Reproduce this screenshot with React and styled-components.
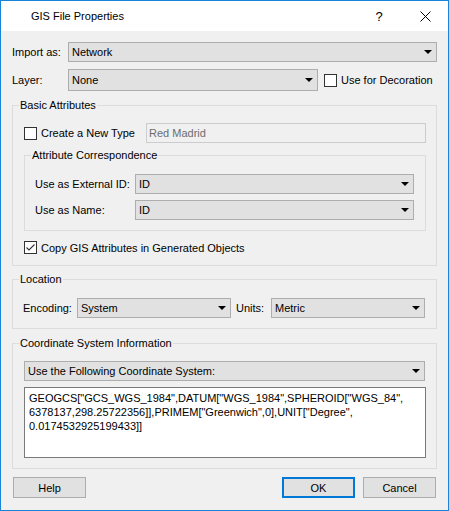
import React from 'react';
import styled, { createGlobalStyle } from 'styled-components';

const GlobalStyle = createGlobalStyle`
  html, body {
    margin: 0;
    padding: 0;
    background: #ffffff;
  }
  body {
    font-family: "Liberation Sans", Arial, sans-serif;
    font-size: 11px;
    color: #000000;
  }
  * {
    box-sizing: border-box;
  }
`;

const Window = styled.div`
  width: 449px;
  height: 511px;
  border: 1px solid #1883d7;
  display: flex;
  flex-direction: column;
  background: #f0f0f0;
`;

const TitleBar = styled.div`
  height: 30px;
  background: #ffffff;
  display: flex;
  align-items: center;
  padding-left: 30px;
`;

const Title = styled.div`
  flex: 1;
  font-size: 11px;
`;

const CaptionButton = styled.div`
  width: 46px;
  height: 30px;
  display: flex;
  align-items: center;
  justify-content: center;
  font-size: 13px;
`;

const Body = styled.div`
  flex: 1;
  display: flex;
  flex-direction: column;
  padding: 11px 11px 0 11px;
`;

const Row = styled.div`
  display: flex;
  align-items: center;
  height: ${p => p.$h || 20}px;
  margin-top: ${p => p.$mt || 0}px;
`;

const Label = styled.span`
  width: ${p => (p.$w ? `${p.$w}px` : 'auto')};
  margin-left: ${p => p.$ml || 0}px;
  flex-shrink: 0;
  white-space: nowrap;
`;

const ComboBox = styled.div`
  height: 100%;
  width: ${p => (p.$w ? `${p.$w}px` : 'auto')};
  flex: ${p => (p.$w ? '0 0 auto' : '1')};
  background: #e1e1e1;
  border: 1px solid #adadad;
  display: flex;
  align-items: center;
  padding: 0 4px 0 3px;
`;

const ComboText = styled.span`
  flex: 1;
  white-space: nowrap;
`;

const TextField = styled.div`
  flex: 1;
  height: 100%;
  border: 1px solid #cccccc;
  background: #f0f0f0;
  color: #6d6d6d;
  display: flex;
  align-items: center;
  padding-left: 2px;
`;

const Box = styled.span`
  width: 13px;
  height: 13px;
  border: 1px solid #333333;
  background: #ffffff;
  flex-shrink: 0;
  margin-left: ${p => p.$ml || 0}px;
  display: flex;
  align-items: center;
  justify-content: center;
`;

const CheckCell = styled.div`
  display: flex;
  align-items: center;
  width: ${p => (p.$w ? `${p.$w}px` : 'auto')};
  flex-shrink: 0;
`;

const GroupBox = styled.fieldset`
  margin: ${p => p.$mt || 0}px 0 0 0;
  border: 1px solid #dcdcdc;
  padding: ${p => p.$pad};
  min-width: 0;
`;

const Legend = styled.legend`
  font-size: 11px;
  line-height: 14px;
  padding: 0 1px;
  margin-left: ${p => p.$ml}px;
`;

const InfoBox = styled.div`
  margin-top: 6px;
  margin-right: -1px;
  height: 71px;
  background: #ffffff;
  border: 1px solid #7a7a7a;
  padding: 3px 4px;
  line-height: 14px;
  white-space: nowrap;
`;

const ButtonBar = styled.div`
  display: flex;
  margin-top: 8px;
  padding: 0 1px;
`;

const Button = styled.div`
  width: 73px;
  height: 21px;
  background: #e1e1e1;
  border: ${p => (p.$default ? '2px solid #0078d7' : '1px solid #adadad')};
  display: flex;
  align-items: center;
  justify-content: center;
  margin-left: ${p => p.$ml || 0}px;
`;

const Spacer = styled.div`
  flex: 1;
`;

function Arrow() {
  return (
    <svg width="8" height="4" viewBox="0 0 8 4">
      <polygon points="0,0 8,0 4,4" fill="#000" />
    </svg>
  );
}

function Combo({ value, w }) {
  return (
    <ComboBox $w={w}>
      <ComboText>{value}</ComboText>
      <Arrow />
    </ComboBox>
  );
}

function CheckBox({ checked, ml }) {
  return (
    <Box $ml={ml}>
      {checked && (
        <svg width="11" height="11" viewBox="0 0 11 11">
          <polyline points="1.5,5.5 4,8 9.5,2.5" fill="none" stroke="#333" strokeWidth="1.1" />
        </svg>
      )}
    </Box>
  );
}

export default function App() {
  return (
    <>
      <GlobalStyle />
      <Window>
        <TitleBar>
          <Title>GIS File Properties</Title>
          <CaptionButton>?</CaptionButton>
          <CaptionButton>
            <svg width="11" height="11" viewBox="0 0 11 11">
              <path d="M0.5 0.5 L10.5 10.5 M10.5 0.5 L0.5 10.5" stroke="#000" strokeWidth="1" />
            </svg>
          </CaptionButton>
        </TitleBar>
        <Body>
          <Row>
            <Label $w={56}>Import as:</Label>
            <Combo value="Network" />
          </Row>
          <Row $h={22} $mt={7}>
            <Label $w={56}>Layer:</Label>
            <Combo value="None" w={250} />
            <CheckBox ml={6} />
            <Label $ml={4}>Use for Decoration</Label>
          </Row>

          <GroupBox $mt={7} $pad="11px 10px 10px 11px">
            <Legend $ml={-5}>Basic Attributes</Legend>
            <Row>
              <CheckCell $w={122}>
                <CheckBox />
                <Label $ml={4}>Create a New Type</Label>
              </CheckCell>
              <TextField>Red Madrid</TextField>
            </Row>
            <GroupBox $mt={5} $pad="12px 11px 10px 10px">
              <Legend $ml={-4}>Attribute Correspondence</Legend>
              <Row>
                <Label $w={100}>Use as External ID:</Label>
                <Combo value="ID" />
              </Row>
              <Row $mt={6}>
                <Label $w={100}>Use as Name:</Label>
                <Combo value="ID" />
              </Row>
            </GroupBox>
            <Row $h={15} $mt={9}>
              <CheckBox checked />
              <Label $ml={4}>Copy GIS Attributes in Generated Objects</Label>
            </Row>
          </GroupBox>

          <GroupBox $mt={6} $pad="12px 11px 10px 10px">
            <Legend $ml={-4}>Location</Legend>
            <Row>
              <Label $w={54}>Encoding:</Label>
              <Combo value="System" w={154} />
              <Label $w={35} $ml={5}>Units:</Label>
              <Combo value="Metric" w={154} />
            </Row>
          </GroupBox>

          <GroupBox $mt={7} $pad="11px 11px 10px 11px">
            <Legend $ml={-5}>Coordinate System Information</Legend>
            <Row>
              <Combo value="Use the Following Coordinate System:" />
            </Row>
            <InfoBox>
              <div>GEOGCS["GCS_WGS_1984",DATUM["WGS_1984",SPHEROID["WGS_84",</div>
              <div>6378137,298.25722356]],PRIMEM["Greenwich",0],UNIT["Degree",</div>
              <div>0.0174532925199433]]</div>
            </InfoBox>
          </GroupBox>

          <ButtonBar>
            <Button>Help</Button>
            <Spacer />
            <Button $default>OK</Button>
            <Button $ml={8}>Cancel</Button>
          </ButtonBar>
        </Body>
      </Window>
    </>
  );
}
